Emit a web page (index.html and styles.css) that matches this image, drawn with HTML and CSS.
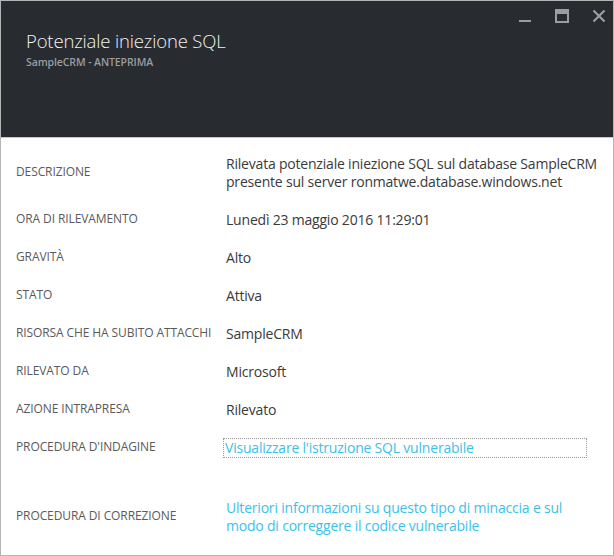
FILE: index.html
```html
<!DOCTYPE html>
<html lang="it">
<head>
<meta charset="utf-8">
<title>Potenziale iniezione SQL</title>
<link rel="stylesheet" href="styles.css">
</head>
<body>
<div class="blade">
  <header class="blade-header">
    <div class="controls">
      <svg class="ctl" width="14" height="14" viewBox="0 0 14 14"><rect x="1" y="11" width="12" height="2" fill="#9b9ea1"/></svg>
      <svg class="ctl" width="14" height="14" viewBox="0 0 14 14"><rect x="1" y="1" width="12" height="12" fill="none" stroke="#9b9ea1" stroke-width="2"/><rect x="1" y="1" width="12" height="4" fill="#9b9ea1"/></svg>
      <svg class="ctl" width="14" height="14" viewBox="0 0 14 14"><path d="M1.5 1.5 L12.5 12.5 M12.5 1.5 L1.5 12.5" stroke="#9b9ea1" stroke-width="2.2" fill="none"/></svg>
    </div>
    <h1 class="title">Potenziale iniezione SQL</h1>
    <div class="subtitle">SampleCRM - ANTEPRIMA</div>
  </header>
  <div class="content">
    <div class="row row-desc">
      <div class="label">DESCRIZIONE</div>
      <div class="value">Rilevata potenziale iniezione SQL sul database SampleCRM presente sul server ronmatwe.database.windows.net</div>
    </div>
    <div class="row">
      <div class="label">ORA DI RILEVAMENTO</div>
      <div class="value">Lunedì 23 maggio 2016 11:29:01</div>
    </div>
    <div class="row">
      <div class="label">GRAVITÀ</div>
      <div class="value">Alto</div>
    </div>
    <div class="row">
      <div class="label">STATO</div>
      <div class="value">Attiva</div>
    </div>
    <div class="row">
      <div class="label">RISORSA CHE HA SUBITO ATTACCHI</div>
      <div class="value">SampleCRM</div>
    </div>
    <div class="row">
      <div class="label">RILEVATO DA</div>
      <div class="value">Microsoft</div>
    </div>
    <div class="row">
      <div class="label">AZIONE INTRAPRESA</div>
      <div class="value">Rilevato</div>
    </div>
    <div class="row">
      <div class="label">PROCEDURA D'INDAGINE</div>
      <div class="value"><a class="link focus" href="#">Visualizzare l'istruzione SQL vulnerabile</a></div>
    </div>
    <div class="row row-fix">
      <div class="label">PROCEDURA DI CORREZIONE</div>
      <div class="value"><a class="link" href="#">Ulteriori informazioni su questo tipo di minaccia e sul modo di correggere il codice vulnerabile</a></div>
    </div>
  </div>
</div>
</body>
</html>
```

FILE: styles.css
```css
* { box-sizing: border-box; }
html, body { margin: 0; padding: 0; background: #fff; }
body { font-family: "Open Sans", "Noto Sans", sans-serif; }

.blade {
  width: 614px;
  height: 556px;
  border: 1px solid #b5b5b5;
  overflow: hidden;
  background: #fff;
}

.blade-header {
  position: relative;
  height: 137px;
  background: #282c31;
  border-bottom: 1px solid #c9c9c9;
  padding: 28px 0 0 25px;
}

.controls {
  position: absolute;
  top: 8px;
  right: 7px;
  display: flex;
  gap: 23px;
}

.title {
  margin: 0;
  font-weight: 300;
  font-size: 18.5px;
  line-height: 24px;
  color: #f2f2f2;
  letter-spacing: -0.15px;
}

.subtitle {
  margin-top: 2px;
  font-size: 10.5px;
  font-weight: 600;
  color: #9a9da0;
  letter-spacing: -0.1px;
}

.content {
  padding-top: 5px;
}

.row {
  display: grid;
  grid-template-columns: 210px 1fr;
  align-items: center;
  height: 38px;
  padding-left: 15px;
}

.row-desc { height: 56px; }
.row-fix { height: 60px; margin-top: 20px; }

.label {
  font-size: 12px;
  color: #5a5a5a;
  letter-spacing: -0.1px;
  white-space: nowrap;
}

.value {
  font-size: 14px;
  line-height: 18px;
  color: #3a3a3a;
  letter-spacing: -0.2px;
  padding: 3px 12px 0 0;
}

.link {
  color: #3dbfea;
  text-decoration: none;
}

.link.focus {
  display: block;
  margin-left: -2px;
  width: 362px;
  padding-left: 1px;
  outline: 1px dotted #999;
}
```
